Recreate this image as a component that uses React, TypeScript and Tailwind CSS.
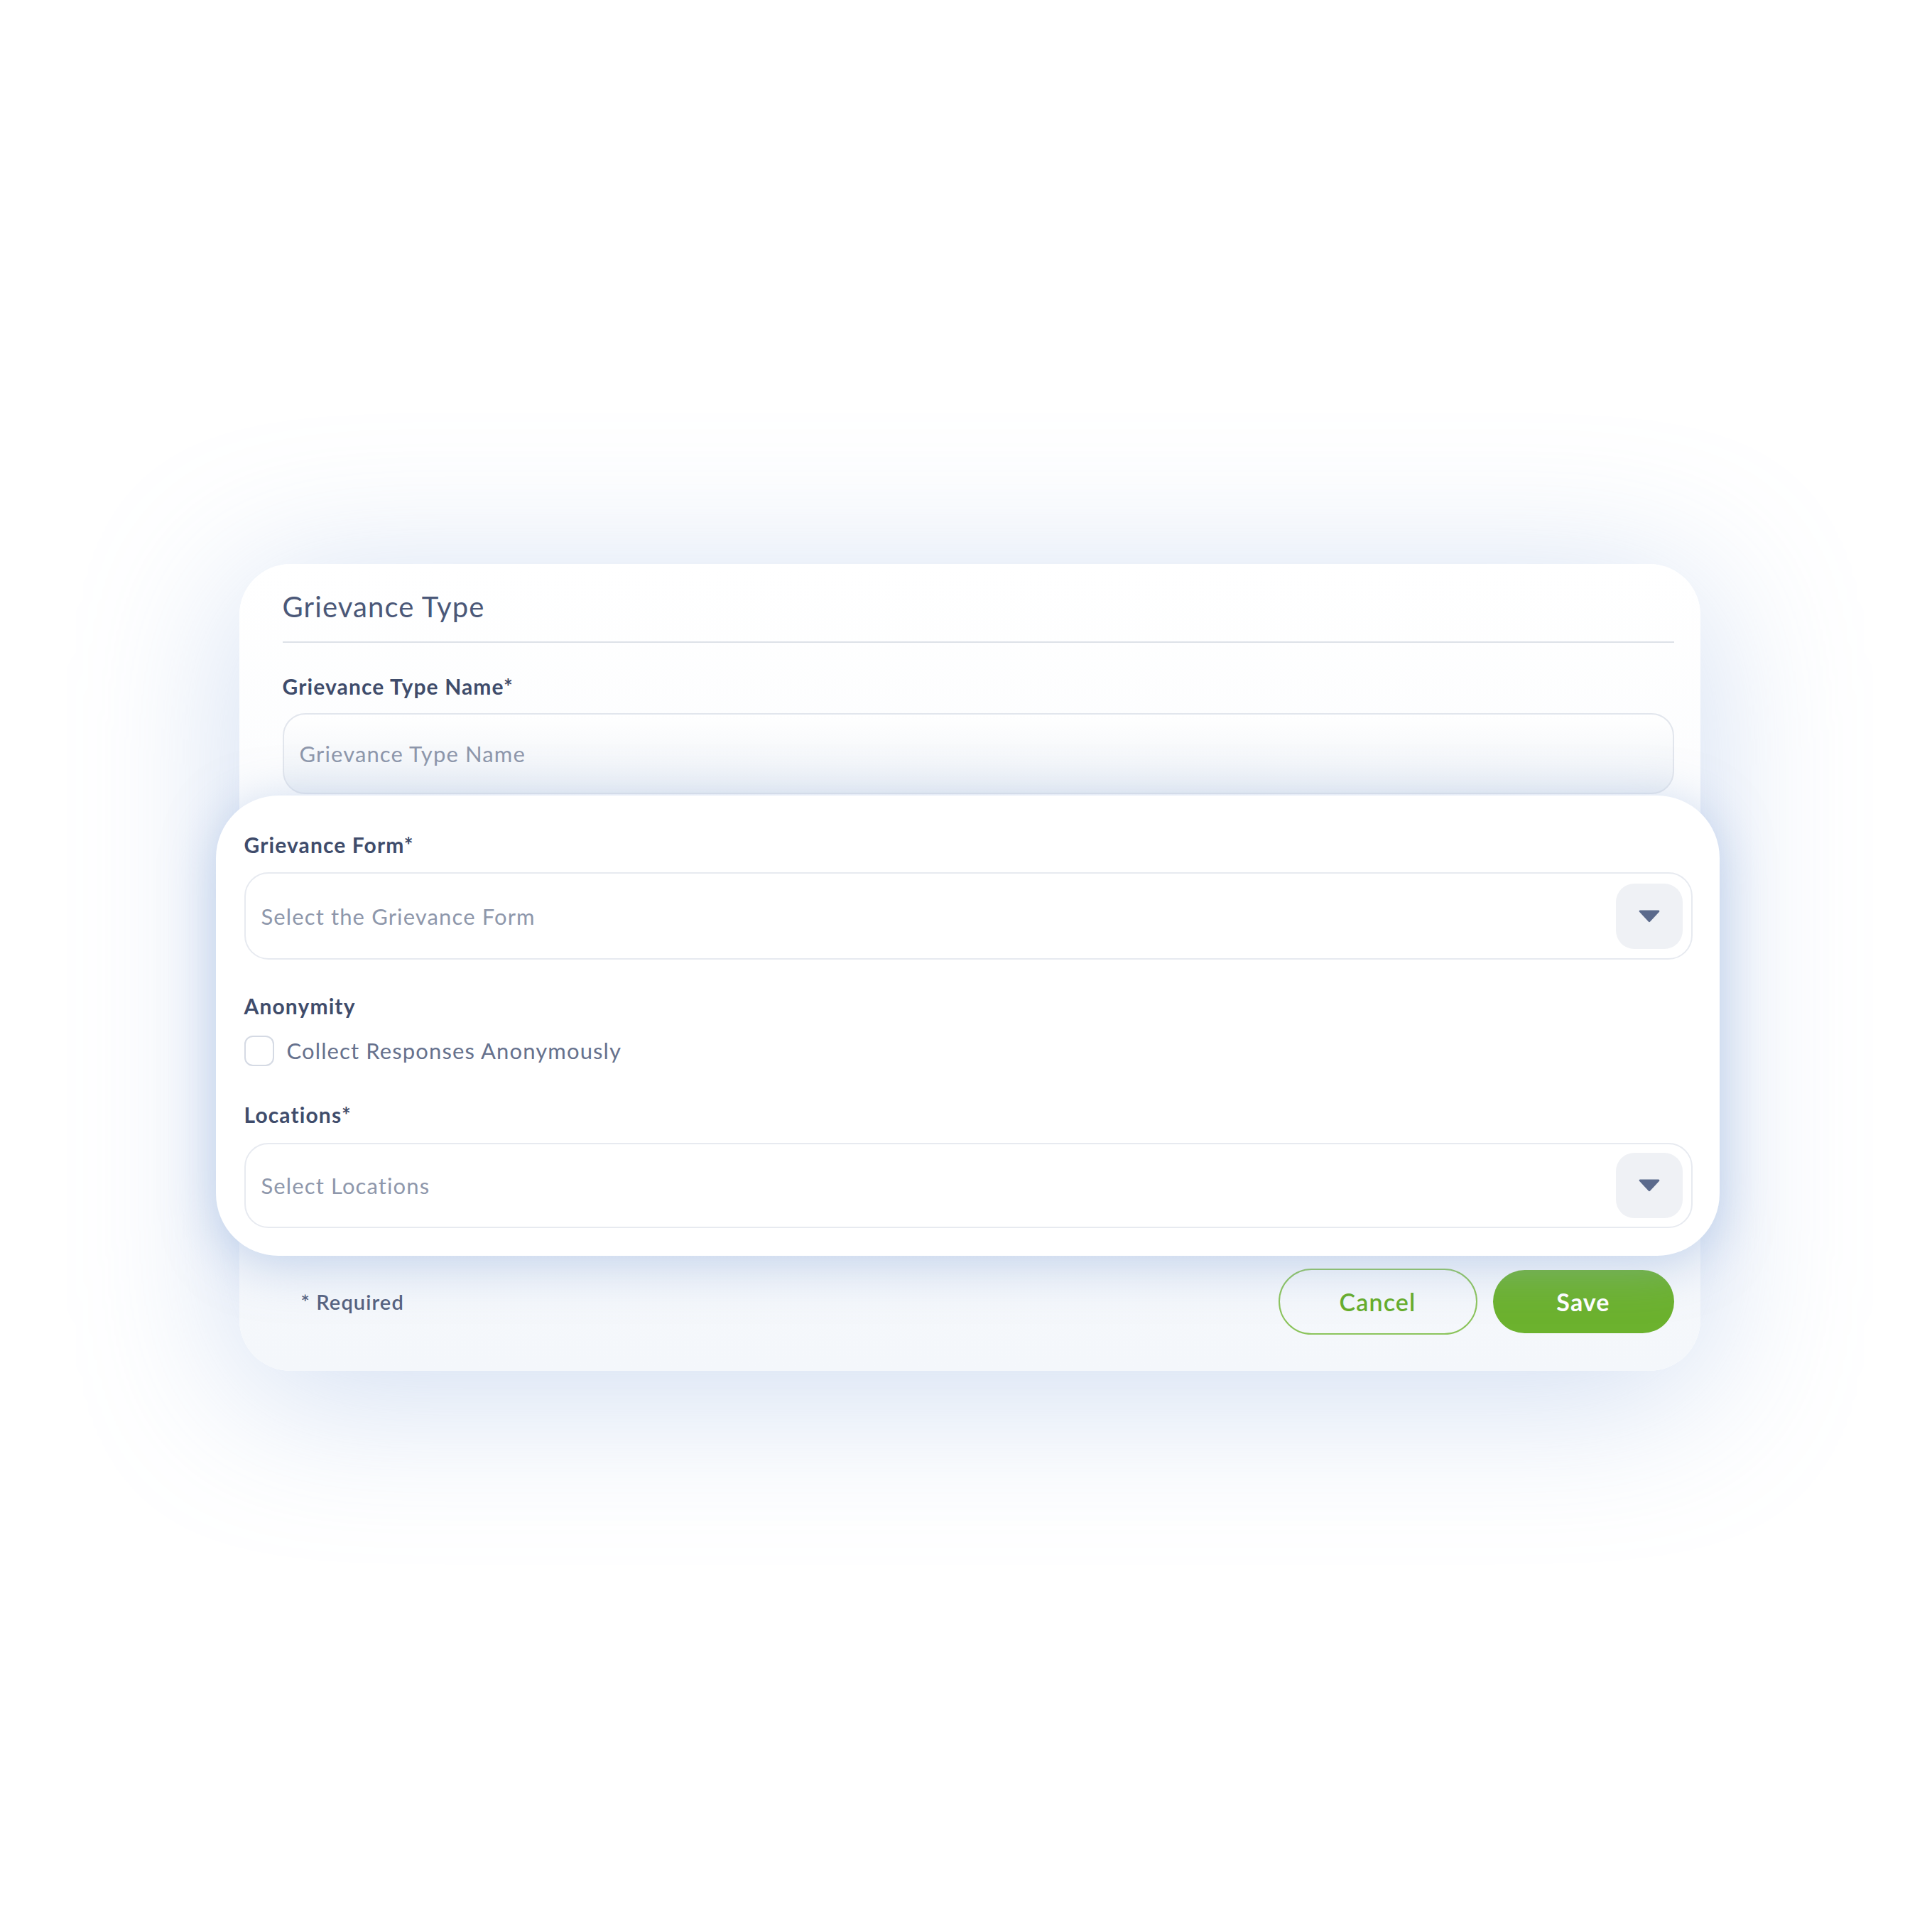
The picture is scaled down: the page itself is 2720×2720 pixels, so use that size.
import React, { useState } from 'react';

const Caret = () => (
  <svg width="30" height="20" viewBox="0 0 30 20" fill="#5b6a8c">
    <path d="M2 1.5h26c1.2 0 1.8 1.4 1 2.3L16.2 17.6c-.6.7-1.8.7-2.4 0L1 3.8c-.8-.9-.2-2.3 1-2.3z" />
  </svg>
);

const Select: React.FC<{ placeholder: string; h: string }> = ({ placeholder, h }) => (
  <div className={`flex items-center justify-between ${h} border-2 border-[#e7eaf0] rounded-[34px] bg-white pl-[22px] pr-[12px]`}>
    <span className="text-[31px] text-[#8e97ab]">{placeholder}</span>
    <button className="w-[94px] h-[92px] rounded-[26px] bg-[#eff1f5] flex items-center justify-center">
      <Caret />
    </button>
  </div>
);

export default function App() {
  const [anon, setAnon] = useState(false);

  return (
    <div className="w-[2720px] h-[2720px] bg-white flex items-center justify-center pl-[10px] pt-[4px] tracking-[0.07em] font-['Lato','Open_Sans',sans-serif]">
      {/* Back card */}
      <div className="w-[2057px] rounded-[72px] bg-gradient-to-b from-white to-[#f4f7fb] shadow-[0_30px_220px_rgba(140,172,222,0.42)] pl-[61px] pr-[37px] pt-[37px] pb-[51px]">
        <h1 className="text-[40px] leading-[46px] text-[#4b5878]">Grievance Type</h1>
        <div className="h-[2px] bg-[#dde1e8] mt-[26px]" />

        <label className="block mt-[43px] text-[30px] leading-[36px] font-bold text-[#3f4c6b]">Grievance Type Name*</label>
        <div className="mt-[20px] h-[114px] border-2 border-[#e2e6ed] rounded-[32px] bg-gradient-to-b from-white to-[#eef2f7] flex items-center pl-[22px]">
          <span className="text-[31px] text-[#8e97ab]">Grievance Type Name</span>
        </div>

        {/* Front card */}
        <div className="relative mt-[2px] -ml-[94px] -mr-[64px] rounded-[88px] bg-white shadow-[0_12px_70px_rgba(140,170,218,0.5)] pl-[40px] pr-[38px] pt-[51px] pb-[39px]">
          <label className="block text-[30px] leading-[36px] font-bold text-[#3f4c6b]">Grievance Form*</label>
          <div className="mt-[21px]">
            <Select placeholder="Select the Grievance Form" h="h-[123px]" />
          </div>

          <label className="block mt-[47px] text-[30px] leading-[36px] font-bold text-[#3f4c6b]">Anonymity</label>
          <div className="mt-[22px] flex items-center gap-[18px] cursor-pointer" onClick={() => setAnon(!anon)}>
            <div className={`w-[42px] h-[43px] rounded-[12px] border-2 ${anon ? 'border-[#6cb12d] bg-[#6cb12d]' : 'border-[#d5dae4] bg-white'}`} />
            <span className="text-[31px] text-[#66718d]">Collect Responses Anonymously</span>
          </div>

          <label className="block mt-[48px] text-[30px] leading-[36px] font-bold text-[#3f4c6b]">Locations*</label>
          <div className="mt-[22px]">
            <Select placeholder="Select Locations" h="h-[120px]" />
          </div>
        </div>

        {/* Footer */}
        <div className="mt-[18px] flex items-center justify-between">
          <span className="pl-[26px] text-[29px] font-semibold text-[#55617e]">* Required</span>
          <div className="flex items-center gap-[22px]">
            <button className="w-[280px] h-[93px] rounded-full border-2 border-[#8cc45c] text-[34px] font-semibold text-[#67ad2a]">Cancel</button>
            <button className="w-[255px] h-[89px] rounded-full bg-[#6cb22e] text-[34px] font-bold text-white">Save</button>
          </div>
        </div>
      </div>
    </div>
  );
}
